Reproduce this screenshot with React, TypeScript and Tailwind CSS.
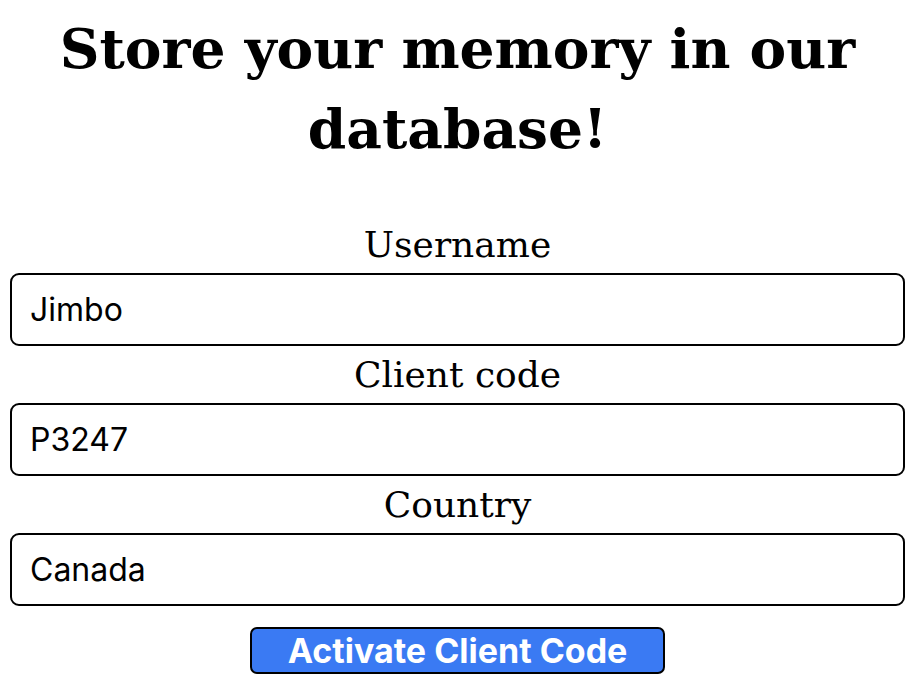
import React from "react";

const serif = { fontFamily: '"DejaVu Serif", "Liberation Serif", serif' };

function Field({ label, value }: { label: string; value: string }) {
  return (
    <div className="flex flex-col items-center">
      <label
        className="h-[57px] leading-[57px] text-[36px] text-black text-center"
        style={serif}
      >
        {label}
      </label>
      <input
        readOnly
        value={value}
        className="w-[895px] h-[73px] border-2 border-black rounded-[9px] px-[18px] text-[32px] text-black bg-white outline-none font-[Inter,sans-serif]"
      />
    </div>
  );
}

export default function App() {
  return (
    <div className="w-[917px] min-h-[692px] bg-white flex flex-col items-center pl-[10px] pr-[12px]">
      <h1
        className="mt-[9px] text-[55px] leading-[80px] font-bold text-black text-center w-[900px]"
        style={serif}
      >
        Store your memory in our database!
      </h1>
      <div className="mt-[47px] flex flex-col">
        <Field label="Username" value="Jimbo" />
        <Field label="Client code" value="P3247" />
        <Field label="Country" value="Canada" />
      </div>
      <button className="mt-[21px] w-[415px] h-[47px] bg-[#3a7af3] border-2 border-black rounded-[7px] text-white text-[34px] font-bold leading-none font-[Inter,sans-serif]">
        Activate Client Code
      </button>
    </div>
  );
}
